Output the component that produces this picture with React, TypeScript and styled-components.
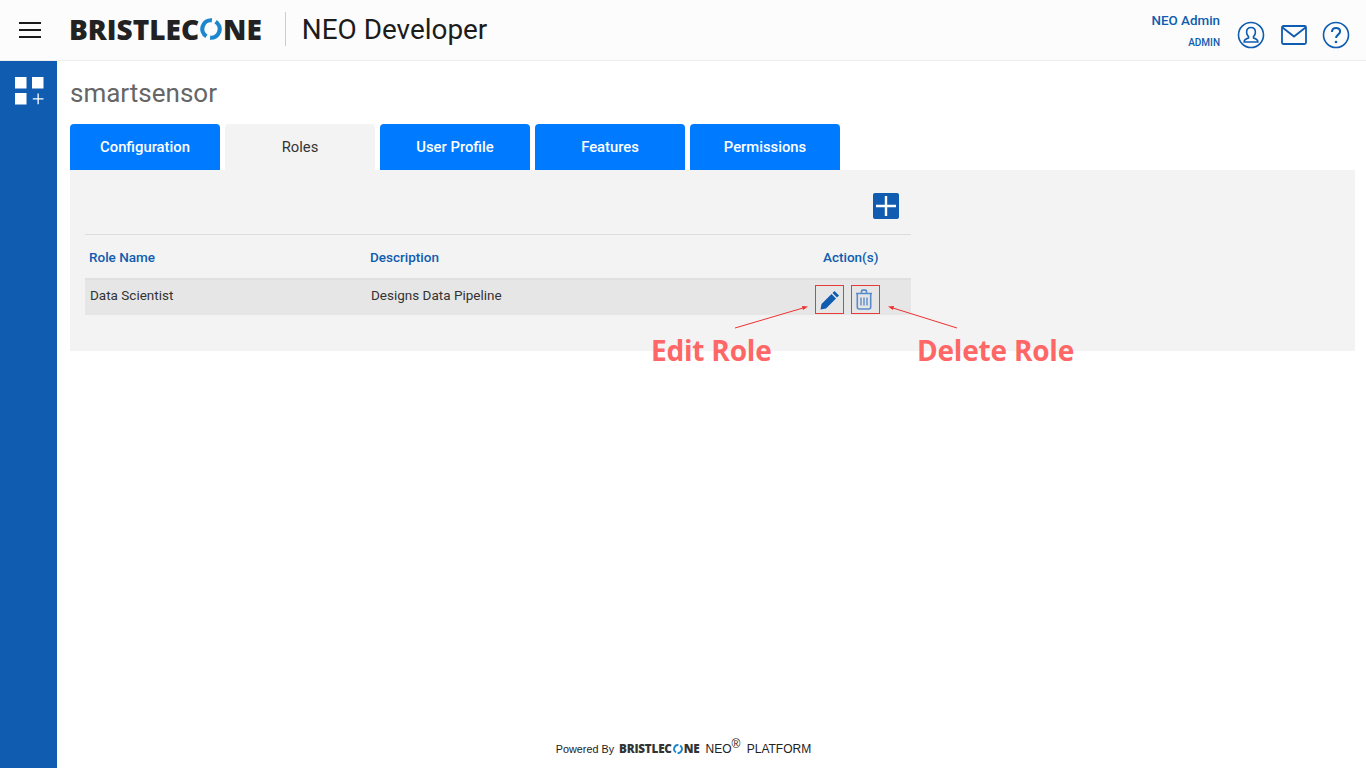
import { createGlobalStyle, styled } from "styled-components";

const blue = "#0f5cb0";

const GlobalStyle = createGlobalStyle`
  html, body { margin: 0; padding: 0; background: #fff; }
  body { font-family: Roboto, "Liberation Sans", sans-serif; }
`;

const Page = styled.div`
  position: relative;
  width: 1366px;
  height: 768px;
  overflow: hidden;
  display: flex;
  flex-direction: column;
`;

const Header = styled.header`
  height: 60px;
  flex: none;
  display: flex;
  align-items: center;
  background: #fcfcfc;
  border-bottom: 1px solid #eeeeee;
  padding: 0 16px 0 19px;
`;

const Burger = styled.div`
  width: 22px;
  display: flex;
  flex-direction: column;
  gap: 5px;
  margin-right: 28px;
  span {
    display: block;
    height: 2px;
    background: #1a1a1a;
  }
`;

const Logo = styled.div<{ $small?: boolean }>`
  display: flex;
  align-items: center;
  font-family: "Open Sans", sans-serif;
  font-weight: 800;
  color: ${(p) => (p.$small ? "#333333" : "#222222")};
  font-size: ${(p) => (p.$small ? "11.7px" : "28px")};
  letter-spacing: ${(p) => (p.$small ? "-0.2px" : "0")};
  line-height: 1;
  margin-top: ${(p) => (p.$small ? "0" : "-2px")};
`;

const AppName = styled.div`
  margin: -2px 0 0 23px;
  padding-left: 16px;
  height: 34px;
  display: flex;
  align-items: center;
  border-left: 1px solid #cccccc;
  font-size: 27.9px;
  color: #1c1c1c;
`;

const UserBlock = styled.div`
  margin-left: auto;
  display: flex;
  align-items: center;
`;

const UserText = styled.div`
  text-align: right;
  color: ${blue};
  margin: 2px 17px 0 0;
`;

const UserName = styled.div`
  font-size: 13.4px;
  font-weight: 500;
  line-height: 18px;
`;

const UserRole = styled.div`
  font-size: 10px;
  font-weight: 500;
  line-height: 14px;
  margin-top: 6px;
`;

const HeaderIcons = styled.div`
  display: flex;
  align-items: center;
  gap: 15.5px;
  margin-top: 10px;
`;

const Body = styled.div`
  flex: 1;
  display: flex;
  min-height: 0;
`;

const Sidebar = styled.aside`
  width: 57px;
  flex: none;
  background: ${blue};
  padding: 15px 0 0 14px;
  box-sizing: border-box;
`;

const Main = styled.main`
  flex: 1;
  display: flex;
  flex-direction: column;
  padding: 0 11px 0 13px;
`;

const Title = styled.h1`
  margin: 16px 0 15px;
  font-size: 26px;
  font-weight: 400;
  line-height: 32px;
  color: #666666;
`;

const Tabs = styled.div`
  display: flex;
  gap: 5px;
`;

const Tab = styled.div<{ $active?: boolean }>`
  width: 150px;
  height: 46px;
  display: flex;
  align-items: center;
  justify-content: center;
  border-radius: 4px 4px 0 0;
  font-size: 14.8px;
  font-weight: ${(p) => (p.$active ? 400 : 500)};
  background: ${(p) => (p.$active ? "#f3f3f3" : "#007bff")};
  color: ${(p) => (p.$active ? "#333333" : "#ffffff")};
`;

const Panel = styled.section`
  background: #f3f3f3;
  height: 181px;
  padding: 23px 0 0 15px;
  box-sizing: border-box;
`;

const Table = styled.div`
  width: 826px;
`;

const Toolbar = styled.div`
  display: flex;
  justify-content: flex-end;
  padding-right: 12px;
  height: 41px;
  border-bottom: 1px solid #dddddd;
`;

const AddButton = styled.div`
  width: 26px;
  height: 26px;
  background: ${blue};
  border-radius: 2px;
  display: flex;
  align-items: center;
  justify-content: center;
`;

const columns = "281px 1fr 96px";

const HeadRow = styled.div`
  display: grid;
  grid-template-columns: ${columns};
  height: 43px;
  align-items: center;
  border-bottom: 2px solid #e0e0e0;
  color: ${blue};
  font-size: 13.5px;
  font-weight: 500;
  padding-left: 4px;
`;

const DataRow = styled.div`
  display: grid;
  grid-template-columns: ${columns};
  height: 35px;
  align-items: center;
  background: #e6e6e6;
  color: #333333;
  font-size: 13.5px;
  padding: 0 0 5px 5px;
  box-sizing: border-box;
`;

const Actions = styled.div`
  display: flex;
  gap: 7px;
  align-self: start;
  margin: 5px 0 -5px;
`;

const ActionButton = styled.div`
  width: 29px;
  height: 29px;
  box-sizing: border-box;
  border: 1px solid #e53b3b;
  display: flex;
  align-items: center;
  justify-content: center;
`;

const TrashIcon = styled.svg`
  margin-right: 3px;
`;

const ActionHead = styled.div`
  margin-left: 8px;
`;

const Footer = styled.footer`
  margin: auto 0 0 -58px;
  height: 38px;
  flex: none;
  display: flex;
  align-items: center;
  justify-content: center;
  gap: 5px;
  font-family: "Liberation Sans", sans-serif;
  font-size: 10.8px;
  color: #222222;
`;

const FooterNeo = styled.span`
  font-size: 12px;
  margin-left: 1px;
  sup {
    font-size: 12px;
    line-height: 0;
    vertical-align: 5px;
    margin-right: 3px;
  }
`;

const Callout = styled.div<{ $left: number }>`
  position: absolute;
  top: 329px;
  left: ${(p) => p.$left}px;
  font-family: "Open Sans", sans-serif;
  font-size: 28px;
  font-weight: 700;
  line-height: 42px;
  letter-spacing: -0.2px;
  color: #ff6666;
  white-space: nowrap;
`;

const Arrows = styled.svg`
  position: absolute;
  top: 0;
  left: 0;
  pointer-events: none;
`;

function LogoO({ size }: { size: number }) {
  return (
    <svg width={size} height={size} viewBox="0 0 24 24" style={{ margin: "0 1px" }}>
      <path d="M13 2.5A9.5 9.5 0 0 0 7 20" fill="none" stroke="#1b87cf" strokeWidth="4.6" />
      <path d="M11 21.5A9.5 9.5 0 0 0 17 4" fill="none" stroke="#1b87cf" strokeWidth="4.6" />
    </svg>
  );
}

function Brand({ small }: { small?: boolean }) {
  return (
    <Logo $small={small}>
      BRISTLEC
      <LogoO size={small ? 10 : 22} />
      NE
    </Logo>
  );
}

export default function App() {
  return (
    <Page>
      <GlobalStyle />
      <Header>
        <Burger>
          <span />
          <span />
          <span />
        </Burger>
        <Brand />
        <AppName>NEO Developer</AppName>
        <UserBlock>
          <UserText>
            <UserName>NEO Admin</UserName>
            <UserRole>ADMIN</UserRole>
          </UserText>
          <HeaderIcons>
            <svg width="28" height="28" viewBox="0 0 28 28" fill="none" stroke={blue} strokeWidth="1.6">
              <circle cx="14" cy="14" r="12.5" />
              <path d="M14 6.5c-2.8 0-4.4 2.1-4.4 4.7 0 1.9.8 3.4 1.9 4.4v1.3c-1.6.7-4.3 1.4-4.3 3.4v.7h13.6v-.7c0-2-2.7-2.7-4.3-3.4v-1.3c1.1-1 1.9-2.5 1.9-4.4 0-2.6-1.6-4.7-4.4-4.7z" />
            </svg>
            <svg width="26" height="20" viewBox="0 0 26 20" fill="none" stroke={blue} strokeWidth="1.8">
              <rect x="1" y="1" width="24" height="18" rx="1.5" />
              <path d="M1.5 2.5 13 11.5 24.5 2.5" />
            </svg>
            <svg width="28" height="28" viewBox="0 0 28 28" fill="none" stroke={blue} strokeWidth="1.6">
              <circle cx="14" cy="14" r="12.5" />
              <path d="M10 11c0-2.5 1.8-4 4.1-4 2.3 0 4 1.5 4 3.5 0 3-4 3.3-4 6.5" strokeWidth="2" />
              <circle cx="14" cy="21" r="1.3" fill={blue} stroke="none" />
            </svg>
          </HeaderIcons>
        </UserBlock>
      </Header>
      <Body>
        <Sidebar>
          <svg width="30" height="30" viewBox="0 0 30 30" fill="#ffffff">
            <rect x="1" y="1" width="11.5" height="11.5" />
            <rect x="18" y="1" width="11.5" height="11.5" />
            <rect x="1" y="17" width="11.5" height="11.5" />
            <path d="M23.5 17.5h1.3v4.7h4.7v1.3h-4.7v4.7h-1.3v-4.7h-4.7v-1.3h4.7z" />
          </svg>
        </Sidebar>
        <Main>
          <Title>smartsensor</Title>
          <Tabs>
            <Tab>Configuration</Tab>
            <Tab $active>Roles</Tab>
            <Tab>User Profile</Tab>
            <Tab>Features</Tab>
            <Tab>Permissions</Tab>
          </Tabs>
          <Panel>
            <Table>
              <Toolbar>
                <AddButton>
                  <svg width="22" height="22" viewBox="0 0 22 22" stroke="#ffffff" strokeWidth="2.4">
                    <path d="M11 1v20M1 11h20" />
                  </svg>
                </AddButton>
              </Toolbar>
              <HeadRow>
                <div>Role Name</div>
                <div>Description</div>
                <ActionHead>Action(s)</ActionHead>
              </HeadRow>
              <DataRow>
                <div>Data Scientist</div>
                <div>Designs Data Pipeline</div>
                <Actions>
                  <ActionButton>
                    <svg width="20" height="20" viewBox="0 0 20 20" fill={blue}>
                      <path d="M14.5 1 19 5.5 17 7.5 12.5 3zM11.5 4 16 8.5 6 18.5 0.5 19.5 1.5 14z" />
                    </svg>
                  </ActionButton>
                  <ActionButton>
                    <TrashIcon width="18" height="21" viewBox="0 0 18 21" fill="none" stroke="#5a8ccb" strokeWidth="1.6">
                      <path d="M1 4.5h16M6.5 4V2.3c0-.7.5-1.2 1.2-1.2h2.6c.7 0 1.2.5 1.2 1.2V4" />
                      <path d="M2.3 4.5V18c0 1.2.8 2 2 2h9.4c1.2 0 2-.8 2-2V4.5" />
                      <path d="M6 8.5v8M9 8.5v8M12 8.5v8" strokeWidth="1.4" />
                    </TrashIcon>
                  </ActionButton>
                </Actions>
              </DataRow>
            </Table>
          </Panel>
          <Footer>
            <span>Powered By</span>
            <Brand small />
            <FooterNeo>
              NEO<sup>®</sup> PLATFORM
            </FooterNeo>
          </Footer>
        </Main>
      </Body>
      <Arrows width="1366" height="768" viewBox="0 0 1366 768" fill="#f03030" stroke="none">
        <path d="M735 328 803 308" stroke="#f03030" strokeWidth="1" />
        <path d="M808 306.5 802 306 803 310z" />
        <path d="M957 328 893 308" stroke="#f03030" strokeWidth="1" />
        <path d="M888 306.5 894 306 893 310z" />
      </Arrows>
      <Callout $left={651}>Edit Role</Callout>
      <Callout $left={917}>Delete Role</Callout>
    </Page>
  );
}
